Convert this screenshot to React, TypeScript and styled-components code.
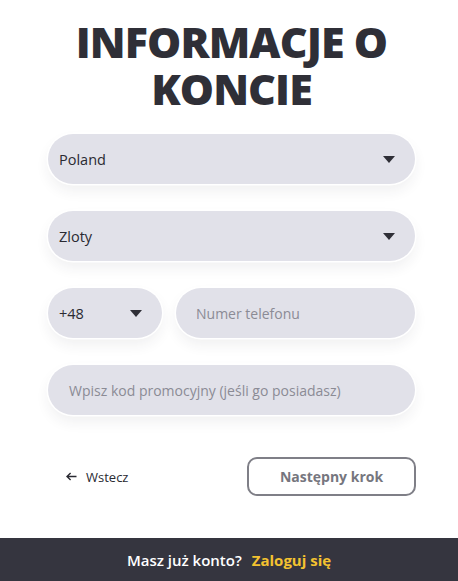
import styled, { createGlobalStyle } from "styled-components";

const GlobalStyle = createGlobalStyle`
  html, body {
    margin: 0;
    padding: 0;
    background: #ffffff;
    font-family: "Open Sans", "Noto Sans", sans-serif;
  }
`;

const Page = styled.div`
  min-height: 100vh;
  display: flex;
  flex-direction: column;
`;

const Main = styled.main`
  flex: 1;
  padding: 18px 43px 0 48px;
  display: flex;
  flex-direction: column;
`;

const Title = styled.h1`
  margin: 0 0 22px;
  text-align: center;
  white-space: nowrap;
  font-size: 43px;
  line-height: 47px;
  font-weight: 800;
  color: #2f2f37;
  letter-spacing: -0.9px;
`;

const Form = styled.div`
  display: flex;
  flex-direction: column;
  gap: 27px;
`;

const Row = styled.div`
  display: flex;
  gap: 14px;
`;

const Field = styled.div<{ $width?: number; $grow?: boolean; $pad?: number }>`
  box-sizing: border-box;
  height: 50px;
  flex: ${(p) => (p.$width ? `0 0 ${p.$width}px` : p.$grow ? "1 1 0" : "none")};
  display: flex;
  align-items: center;
  justify-content: space-between;
  padding: 0 20px 0 ${(p) => p.$pad ?? 11}px;
  border-radius: 25px;
  background: #e1e1e9;
  box-shadow: 0 0 0 1.5px #ffffff, 0 7px 14px rgba(40, 40, 60, 0.07);
  font-size: 14.5px;
  color: #2a2a32;
`;

const Placeholder = styled.span`
  color: #8b8b95;
  font-size: 14px;
`;

const Caret = styled.span`
  width: 0;
  height: 0;
  border-left: 6px solid transparent;
  border-right: 6px solid transparent;
  border-top: 7px solid #2f2f37;
`;

const Actions = styled.div`
  margin-top: 42px;
  display: flex;
  align-items: center;
  justify-content: space-between;
`;

const BackLink = styled.a`
  margin-left: 18px;
  display: flex;
  align-items: center;
  gap: 9px;
  font-size: 13px;
  color: #2a2a32;
  text-decoration: none;
  cursor: pointer;
`;

const NextButton = styled.button`
  box-sizing: border-box;
  width: 169px;
  height: 39px;
  margin-right: -1px;
  border: 2px solid #7f7f87;
  border-radius: 10px;
  background: #ffffff;
  font-family: inherit;
  font-size: 14px;
  font-weight: 700;
  color: #76767e;
  cursor: pointer;
`;

const Footer = styled.footer`
  height: 43px;
  background: #35353f;
  display: flex;
  align-items: center;
  justify-content: center;
  gap: 10px;
  font-size: 15px;
  font-weight: 600;
  color: #ffffff;
`;

const LoginLink = styled.a`
  color: #f3c230;
  font-weight: 700;
  text-decoration: none;
  cursor: pointer;
`;

const ArrowLeft = () => (
  <svg width="11" height="9" viewBox="0 0 11 9" fill="none">
    <path d="M10.5 4.5H1.2M4.6 1L1 4.5L4.6 8" stroke="#2a2a32" strokeWidth="1.4" />
  </svg>
);

export default function App() {
  return (
    <Page>
      <GlobalStyle />
      <Main>
        <Title>
          INFORMACJE O
          <br />
          KONCIE
        </Title>
        <Form>
          <Field>
            Poland
            <Caret />
          </Field>
          <Field>
            Zloty
            <Caret />
          </Field>
          <Row>
            <Field $width={114}>
              +48
              <Caret />
            </Field>
            <Field $grow $pad={20}>
              <Placeholder>Numer telefonu</Placeholder>
            </Field>
          </Row>
          <Field $pad={21}>
            <Placeholder>Wpisz kod promocyjny (jeśli go posiadasz)</Placeholder>
          </Field>
        </Form>
        <Actions>
          <BackLink>
            <ArrowLeft />
            Wstecz
          </BackLink>
          <NextButton>Następny krok</NextButton>
        </Actions>
      </Main>
      <Footer>
        Masz już konto?
        <LoginLink>Zaloguj się</LoginLink>
      </Footer>
    </Page>
  );
}
